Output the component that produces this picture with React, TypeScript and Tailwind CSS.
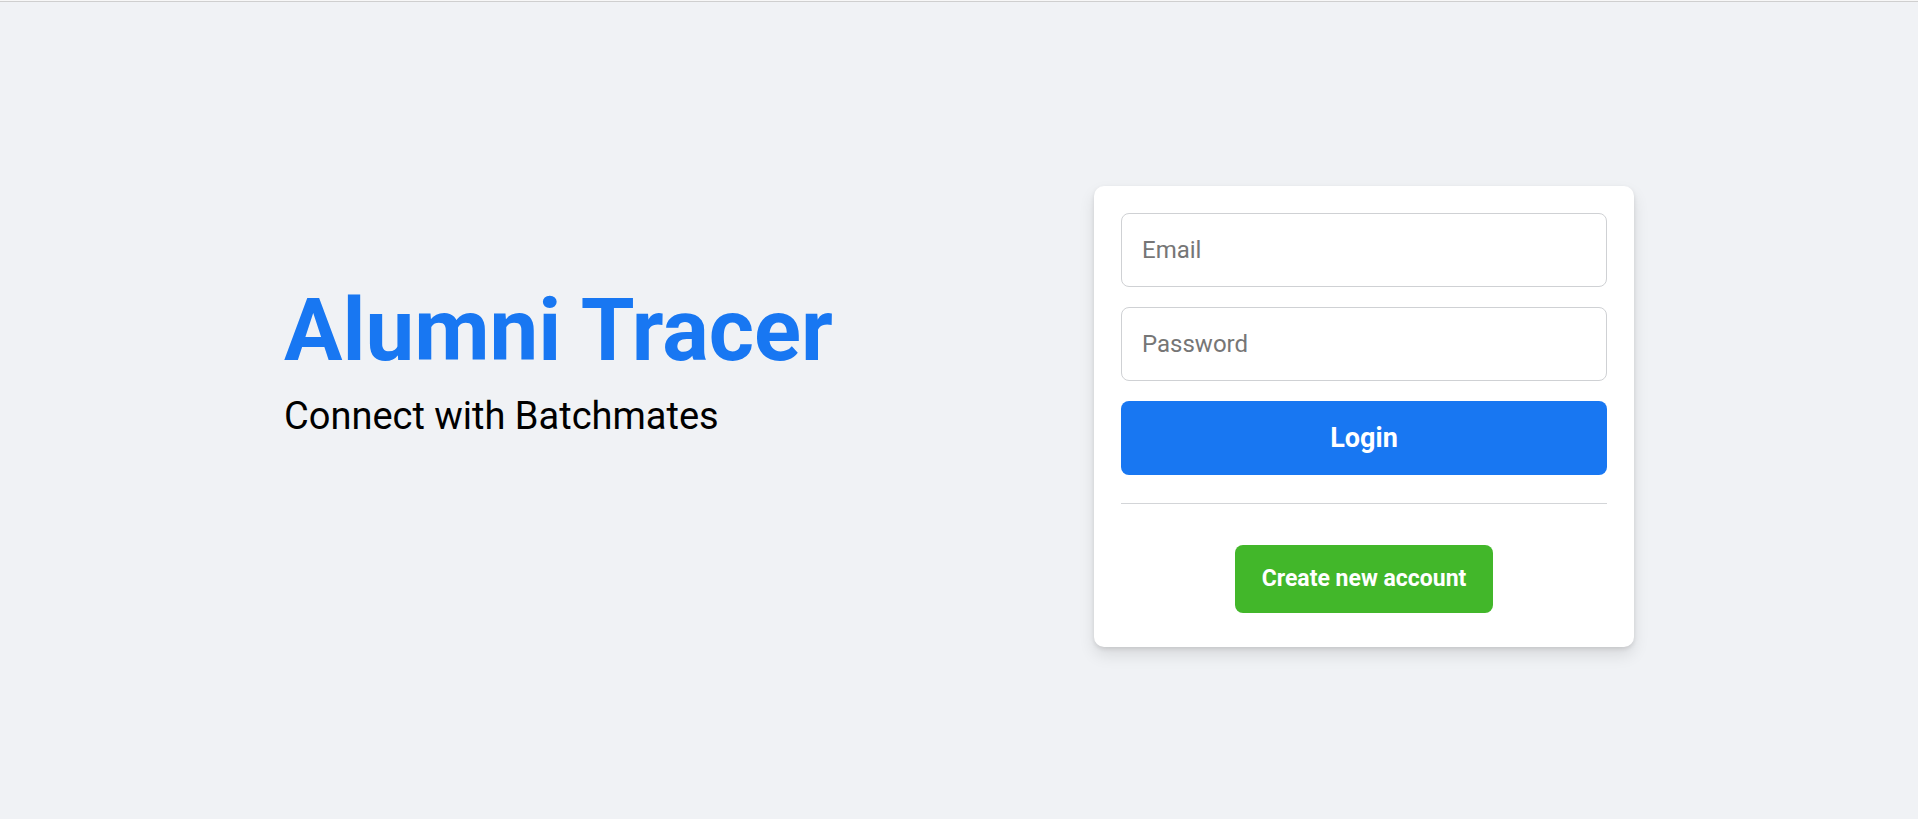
import React from 'react'

const App = () => {
  return (
    <div className="min-h-screen w-full bg-[#f0f2f5] font-['Roboto','Liberation_Sans',sans-serif]">
      <div className="h-px w-full bg-[#f7f7f7]" />
      <div className="h-px w-full bg-[#cfcfcf]" />
      <div className="mx-auto flex w-[1350px] items-center justify-between pt-[184px]">
        <div className="flex flex-col gap-[21px] pb-[110px]">
          <h1 className="m-0 text-[87px] font-bold leading-[87px] text-[#1877f2]">Alumni Tracer</h1>
          <p className="m-0 text-[38px] leading-[42px] text-black">Connect with Batchmates</p>
        </div>
        <div className="flex w-[540px] flex-col rounded-[10px] bg-white px-[27px] pt-[27px] pb-[34px] shadow-[0_2px_4px_rgba(0,0,0,0.1),0_8px_16px_rgba(0,0,0,0.1)]">
          <form className="flex flex-col gap-[20px]" onSubmit={(e) => e.preventDefault()}>
            <input
              type="text"
              placeholder="Email"
              className="h-[74px] w-full rounded-[8px] border border-[#cfd1d4] px-[20px] text-[24px] text-[#1c1e21] outline-none placeholder:text-[#767676]"
            />
            <input
              type="password"
              placeholder="Password"
              className="h-[74px] w-full rounded-[8px] border border-[#cfd1d4] px-[20px] text-[24px] text-[#1c1e21] outline-none placeholder:text-[#767676]"
            />
            <button
              type="submit"
              className="h-[74px] w-full rounded-[8px] bg-[#1877f2] text-[27px] font-bold text-white"
            >
              Login
            </button>
          </form>
          <div className="mt-[28px] h-px w-full bg-[#d3d5d8]" />
          <div className="mt-[41px] flex justify-center">
            <button
              type="button"
              className="h-[68px] rounded-[8px] bg-[#42b72a] px-[27px] text-[23px] font-bold text-white"
            >
              Create new account
            </button>
          </div>
        </div>
      </div>
    </div>
  )
}

export default App
